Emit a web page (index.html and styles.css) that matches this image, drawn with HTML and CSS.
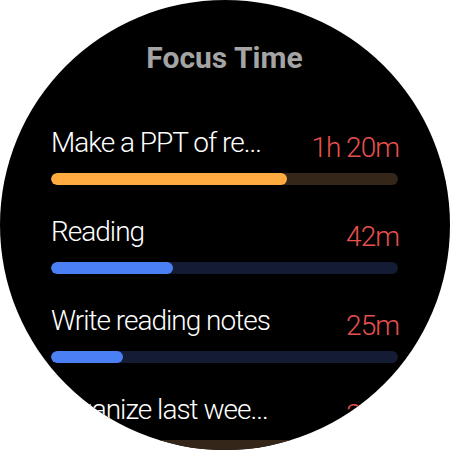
FILE: index.html
```html
<!DOCTYPE html>
<html>
<head>
<meta charset="utf-8">
<link rel="stylesheet" href="styles.css">
</head>
<body>
<div class="watch">
  <h1 class="title">Focus Time</h1>
  <div class="list">
    <div class="task">
      <div class="task-head"><span class="name">Make a PPT of re...</span><span class="time">1h 20m</span></div>
      <div class="track track-orange"><div class="fill fill-orange" style="width:68%"></div></div>
    </div>
    <div class="task">
      <div class="task-head"><span class="name">Reading</span><span class="time">42m</span></div>
      <div class="track track-blue"><div class="fill fill-blue" style="width:35.2%"></div></div>
    </div>
    <div class="task">
      <div class="task-head"><span class="name">Write reading notes</span><span class="time">25m</span></div>
      <div class="track track-blue"><div class="fill fill-blue" style="width:20.7%"></div></div>
    </div>
    <div class="task">
      <div class="task-head"><span class="name">Organize last wee...</span><span class="time">30m</span></div>
      <div class="track track-orange"><div class="fill fill-orange" style="width:10%"></div></div>
    </div>
  </div>
</div>
</body>
</html>
```
FILE: styles.css
```css
html, body {
  margin: 0;
  padding: 0;
  background: #ffffff;
}
.watch {
  width: 450px;
  height: 450px;
  border-radius: 50%;
  background: #000000;
  overflow: hidden;
  box-sizing: border-box;
  padding: 40px 52px 0 51px;
  display: flex;
  flex-direction: column;
  font-family: Roboto, "Liberation Sans", sans-serif;
}
.title {
  margin: 0;
  font-size: 30px;
  line-height: 36px;
  font-weight: 700;
  color: #a4a4a4;
  text-align: center;
}
.list {
  margin-top: 50px;
  display: flex;
  flex-direction: column;
  gap: 30px;
}
.task {
  display: flex;
  flex-direction: column;
}
.task-head {
  display: flex;
  justify-content: space-between;
  align-items: flex-start;
  font-size: 28px;
  line-height: 34px;
  font-weight: 300;
  letter-spacing: -1px;
}
.name {
  color: #ffffff;
  white-space: nowrap;
}
.time {
  color: #e85050;
  margin-top: 5px;
  margin-right: -1px;
  white-space: nowrap;
}
.track {
  margin-top: 8px;
  height: 12px;
  border-radius: 6px;
  overflow: hidden;
}
.fill {
  height: 100%;
  border-radius: 6px;
}
.track-orange { background: #34271a; }
.fill-orange { background: #ffab40; }
.track-blue { background: #131c33; }
.fill-blue { background: #4a80f4; }
```
